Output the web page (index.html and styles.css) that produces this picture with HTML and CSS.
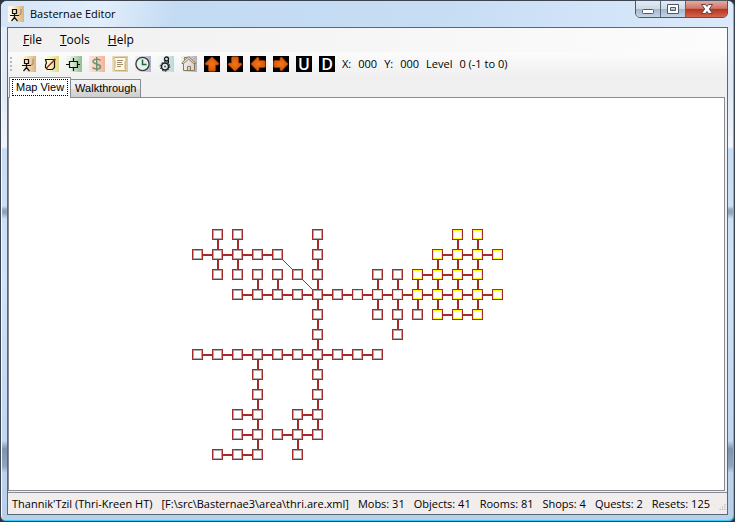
FILE: index.html
```html
<!DOCTYPE html>
<html lang="en">
<head>
<meta charset="utf-8">
<title>Basternae Editor</title>
<link rel="stylesheet" href="styles.css">
</head>
<body>
<div class="window">
  <header class="titlebar">
    <svg class="icon" viewBox="0 0 16 16" aria-hidden="true"><use href="#mob"/></svg>
    <h1 class="title">Basternae Editor</h1>
    <div class="caption">
      <button class="cap" type="button" aria-label="Minimize"><svg width="14" height="12" viewBox="0 0 14 12"><rect x="1.500" y="6.500" width="11" height="4" rx="1" fill="#fff" stroke="#50596b"/></svg></button>
      <button class="cap" type="button" aria-label="Maximize"><svg width="14" height="12" viewBox="0 0 14 12"><path d="M1.500 1.500h11v9h-11zM4.500 4.500v3h5v-3z" fill="#fff" fill-rule="evenodd" stroke="#50596b"/></svg></button>
      <button class="cap close" type="button" aria-label="Close"><svg width="14" height="12" viewBox="0 0 14 12"><path d="M1.500 1.500h4L7 3.500l1.500-2h4L9.300 6l3.200 4.500h-4L7 8.500l-1.500 2h-4L4.700 6z" fill="#fff" stroke="#5b4650"/></svg></button>
    </div>
  </header>

  <main class="client">
    <nav class="menu">
      <button type="button"><u>F</u>ile</button>
      <button type="button"><u>T</u>ools</button>
      <button type="button"><u>H</u>elp</button>
    </nav>

    <div class="toolbar">
      <span class="grip"></span>
      <div class="tools">
        <button type="button" aria-label="Mobs"><svg class="icon" viewBox="0 0 16 16"><use href="#mob"/></svg></button>
        <button type="button" aria-label="Objects"><svg class="icon" viewBox="0 0 16 16"><rect width="16" height="16" fill="url(#yellow)"/><path d="M2.500 3.500h9v8l-2 2h-5l-2-2V9l1-2z" fill="none" stroke="#111" stroke-width="1.200"/><path d="M3.500 12L12.500 3" stroke="#a02018" stroke-width="1.500"/></svg></button>
        <button type="button" aria-label="Rooms"><svg class="icon" viewBox="0 0 16 16"><rect width="16" height="16" fill="url(#green)"/><path d="M3.500 5.500h8v6h-8zM7.500 2v3.500M7.500 11.500V15M0 8.500h3.500M11.500 8.500H14" fill="none" stroke="#111" stroke-width="1.200"/></svg></button>
        <button type="button" aria-label="Shops"><svg class="icon" viewBox="0 0 16 16"><rect width="16" height="16" fill="url(#rose)"/><path d="M11.500 4.500C10 2.500 4.500 2.500 4 5.500c0 3 7.500 2 7.500 5.200 0 3-6 3-8 .8M7.700 1v14" fill="none" stroke="#6b9070" stroke-width="1.400"/></svg></button>
        <button type="button" aria-label="Quests"><svg class="icon" viewBox="0 0 16 16"><rect width="16" height="16" fill="url(#tan)"/><path d="M2 1.500h12v3l-1 1v7l1 2H3l-1-2 1-1v-7l-1-1z" fill="#fffbe8" stroke="#c9aa70"/><path d="M5 4.500h6M5 6.500h5M5 8.500h6M5 10.500h4" stroke="#a08c68"/></svg></button>
        <button type="button" aria-label="Resets"><svg class="icon" viewBox="0 0 16 16"><rect width="16" height="16" fill="url(#slate)"/><circle cx="7.500" cy="8" r="6.600" fill="#e9f2ea" stroke="#303a3a" stroke-width="1.300"/><path d="M7.500 3.500V8.500h4" fill="none" stroke="#176b38" stroke-width="1.500"/></svg></button>
        <button type="button" aria-label="Settings"><svg class="icon" viewBox="0 0 16 16"><rect width="16" height="16" fill="url(#aqua)"/><circle cx="7" cy="10.500" r="3.500" fill="none" stroke="#181818" stroke-width="1.500"/><circle cx="7" cy="10.500" r="4.800" fill="none" stroke="#181818" stroke-dasharray="1.500 1.500"/><circle cx="7" cy="10.500" r="1" fill="#555"/><circle cx="8.500" cy="3" r="2" fill="none" stroke="#181818" stroke-width="1.300"/><path d="M10.500 3.500v4" stroke="#181818"/></svg></button>
        <button type="button" aria-label="Home"><svg class="icon" viewBox="0 0 16 16"><rect width="16" height="16" fill="url(#home)"/><path d="M2.500 7.500v7h11v-7M6.500 14.500v-4h3v4M.8 7.500L5 2.500l3-1.700 6.800 6.700M1 7.500h1.500L7.800 3l4.700 4.500h2.300M3.500 4V1.500h2V3" fill="#f2eee8" fill-opacity=".5" stroke="#8b7d5c"/></svg></button>
        <button type="button" aria-label="North"><svg class="icon" viewBox="0 0 16 16"><use href="#arrow"/></svg></button>
        <button type="button" aria-label="South"><svg class="icon" viewBox="0 0 16 16"><use href="#arrow" transform="rotate(180 8 8)"/></svg></button>
        <button type="button" aria-label="West"><svg class="icon" viewBox="0 0 16 16"><use href="#arrow" transform="rotate(270 8 8)"/></svg></button>
        <button type="button" aria-label="East"><svg class="icon" viewBox="0 0 16 16"><use href="#arrow" transform="rotate(90 8 8)"/></svg></button>
        <button type="button" class="letter"><span>U</span></button>
        <button type="button" class="letter"><span>D</span></button>
      </div>
      <div class="coords"><span>X:</span><span>000</span><span>Y:</span><span>000</span><span>Level</span><span>0 (-1 to 0)</span></div>
    </div>

    <div class="tabs" role="tablist">
      <button class="tab active" type="button" role="tab" aria-selected="true"><span>Map View</span></button>
      <button class="tab" type="button" role="tab" aria-selected="false"><span>Walkthrough</span></button>
    </div>

    <section class="panel">
      <svg id="map" width="312" height="232" viewBox="0 0 312 232" role="img" aria-label="Area map" shape-rendering="crispEdges"></svg>
    </section>

    <footer class="status">
      <span>Thannik'Tzil (Thri-Kreen HT)</span>
      <span>[F:\src\Basternae3\area\thri.are.xml]</span>
      <span>Mobs: 31</span>
      <span>Objects: 41</span>
      <span>Rooms: 81</span>
      <span>Shops: 4</span>
      <span>Quests: 2</span>
      <span>Resets: 125</span>
      <svg class="sizer" width="12" height="12" viewBox="0 0 12 12" aria-hidden="true"><path d="M9 1h2v2h-2zM5 5h2v2h-2zM9 5h2v2h-2zM1 9h2v2h-2zM5 9h2v2h-2zM9 9h2v2h-2z" fill="#b4b0b0"/></svg>
    </footer>
  </main>
</div>

<svg class="defs" width="0" height="0" aria-hidden="true">
  <defs>
    <linearGradient id="orange"><stop offset=".2" stop-color="#fdf6ea"/><stop offset="1" stop-color="#e0b070"/></linearGradient>
    <linearGradient id="yellow"><stop offset=".2" stop-color="#fdfbe4"/><stop offset="1" stop-color="#e0da80"/></linearGradient>
    <linearGradient id="green"><stop offset=".2" stop-color="#eef6ec"/><stop offset="1" stop-color="#8fbf8c"/></linearGradient>
    <linearGradient id="rose"><stop offset="0" stop-color="#fbe6dc"/><stop offset="1" stop-color="#f2b49a"/></linearGradient>
    <linearGradient id="tan"><stop offset="0" stop-color="#ecdcc0"/><stop offset="1" stop-color="#e0c8a0"/></linearGradient>
    <linearGradient id="slate"><stop offset=".2" stop-color="#eeeef4"/><stop offset="1" stop-color="#b0b0c8"/></linearGradient>
    <linearGradient id="aqua"><stop offset=".2" stop-color="#eef6f6"/><stop offset="1" stop-color="#bcd8da"/></linearGradient>
    <linearGradient id="home"><stop offset=".1" stop-color="#f0eeec"/><stop offset="1" stop-color="#b4acb4"/></linearGradient>
    <radialGradient id="ember"><stop offset="0" stop-color="#f07818"/><stop offset="1" stop-color="#d45408"/></radialGradient>
    <g id="mob"><rect width="16" height="16" fill="url(#orange)"/><path d="M4.500 3.500h4v4h-4zM6.500 7.500v4M2 9.500h9M6.500 11.500L3.500 15M6.500 11.500L9.500 15" fill="none" stroke="#111" stroke-width="1.200"/><path d="M13 3v5l-2 1" fill="none" stroke="#8b9070"/></g>
    <g id="arrow"><path d="M0 0h16v16H0z" fill="#000"/><path d="M8 .8l7 6.700-1 1.500h-2.500v5.500l-1 .8h-5l-1-.8V9H2L1 7.500z" fill="url(#ember)" stroke="#b84000" stroke-width=".6"/></g>
  </defs>
</svg>
<script src="map.js"></script>
</body>
</html>
```
FILE: styles.css
```css
* { box-sizing: border-box; }

html, body { margin: 0; }

body {
  background: #2b333d;
  color: #000;
  font: 11px/16px "Open Sans", "Noto Sans", sans-serif;
}

button {
  margin: 0;
  padding: 0;
  border: 0;
  background: none;
  color: inherit;
  font: inherit;
}

svg { display: block; }
.defs { position: absolute; }
.icon { width: 16px; height: 16px; flex: none; }

.window {
  display: flex;
  flex-direction: column;
  min-height: 100vh;
  padding: 0 6px 6px;
  border: 1px solid #3b434f;
  border-radius: 7px 7px 6px 6px;
  box-shadow: inset -1px -1px 0 #35cdf0, inset 1px 1px 0 #f4f9ff;
  background:
    linear-gradient(transparent 205px, #8fa4bc 209px, #8fa4bc 212px, transparent 218px, transparent 440px, #7f95ae 448px, #8ea5c0 465px, transparent 472px) 0 0 / 100% 510px no-repeat,
    linear-gradient(#e3edf8 26px, #dfeaf6 90px, #f2f5fb 146px, #c8dcf3 148px, #cfe3fa 280px, #b9cfe9 100%);
}

.titlebar {
  display: flex;
  align-items: flex-start;
  gap: 6px;
  height: 26px;
  margin: 0 -5px 0 -6px;
  padding-left: 7px;
  border-radius: 6px 6px 0 0;
  background: linear-gradient(100deg, #d3e5f8 0, #e2eefb 14%, #c3dbf3 24%, #c6ddf4 60%, #cfe2f7 76%, #dceafa 100%);
}
.titlebar .icon { margin-top: 5px; }
.title {
  flex: 1;
  margin: 5px 0 0;
  font-size: 11px;
  font-weight: 400;
  line-height: 16px;
}

.caption {
  display: flex;
  height: 18px;
  margin: -1px 5px 0 0;
  overflow: hidden;
  border: 1px solid #4d5768;
  border-radius: 0 0 5px 5px;
}
.cap {
  display: flex;
  align-items: center;
  justify-content: center;
  width: 25px;
  border-right: 1px solid #58657a;
  background: linear-gradient(#e3ebf4, #cfdae7 48%, #a4b6ca 52%, #c4d5e7);
}
.cap.close {
  width: 41px;
  border: 0;
  background: linear-gradient(#e6aa9e, #d07566 46%, #b5351f 52%, #d2654a);
}

.client {
  display: flex;
  flex: 1;
  flex-direction: column;
  border: 1px solid #5b6779;
  background: #f0f0f0;
}

.menu {
  display: flex;
  align-items: center;
  gap: 18px;
  height: 24px;
  padding: 0 15px;
  background: linear-gradient(90deg, #f0f0f0, #fcfcfc);
  font-size: 12px;
}

.toolbar {
  display: flex;
  align-items: center;
  height: 24px;
  padding-left: 2px;
  background: linear-gradient(#fcfcfc, #f0f0f0);
}
.grip {
  width: 2px;
  height: 14px;
  margin-right: 8px;
  background: repeating-linear-gradient(#b8b8b8 0 2px, transparent 2px 4px);
}
.tools { display: flex; gap: 7px; }
.letter {
  width: 16px;
  height: 16px;
  background: #000;
  color: #fff;
  font-size: 16px;
  font-weight: 600;
  line-height: 16px;
}
.coords {
  display: flex;
  gap: 7px;
  margin-left: 7px;
}
.coords span { white-space: pre; }

.tabs {
  display: flex;
  align-items: flex-end;
  height: 21px;
  padding-left: 1px;
  font-family: "Liberation Sans", sans-serif;
}
.tab {
  height: 18px;
  padding: 0 4px;
  border: 1px solid #898c95;
  border-left: 0;
  border-bottom: 0;
  background: linear-gradient(#f2f2f2, #ebebeb 50%, #dcdcdc 51%, #cfcfcf);
  line-height: 17px;
}
.tab.active {
  z-index: 1;
  height: 21px;
  margin-bottom: -1px;
  padding: 1px 2px 2px;
  border-left: 1px solid #898c95;
  background: #fff;
}
.tab.active span {
  display: block;
  padding: 0 3px;
  border: 1px dotted #000;
  line-height: 15px;
}

.panel {
  flex: 1;
  margin: 0 2px 1px 0;
  padding: 131px 20px 20px 183px;
  border: 1px solid #898c95;
  background: #fff;
}

.edge { fill: none; stroke: #a52a2a; stroke-width: 2px; }
.diagonal { stroke: #a52a2a; stroke-width: 1px; }
.room { fill: #a52a2a; }
.inside { fill: #a9a9a9; }
.city { fill: #d3d3d3; }
.field { fill: #ff0; }
.floor { fill: #fff; }

.status {
  display: flex;
  gap: 9px;
  height: 22px;
  padding: 3px 0 0 4px;
  border-top: 1px solid #898c95;
  background: #f1eded;
  white-space: nowrap;
}
.sizer { margin: 5px 1px 0 auto; }
```
FILE: map.js
```
// One character per grid cell: i = inside, c = city, f = field, "." = empty.
const rooms = [
  ".ii...i......ff.",
  "iiiii.i.....ffff",
  ".iiiiii..iiffff.",
  "..iiiiiicccfffff",
  "......i..iiifff.",
  "......i...i.....",
  "iiiiiiiiii......",
  "...i..i.........",
  "...i..i.........",
  "..ii.ii.........",
  "..iiiii.........",
  ".iii.i.........."
];
// Exits as [fromColumn, fromRow, toColumn, toRow].
const exits = [
  [0, 1, 4, 1], [12, 1, 15, 1], [11, 2, 14, 2], [2, 3, 15, 3], [12, 4, 14, 4],
  [0, 6, 9, 6], [2, 9, 3, 9], [5, 9, 6, 9], [2, 10, 3, 10], [4, 10, 6, 10], [1, 11, 3, 11],
  [1, 0, 1, 2], [2, 0, 2, 2], [3, 2, 3, 3], [4, 2, 4, 3], [6, 0, 6, 10],
  [9, 2, 9, 4], [10, 2, 10, 5], [11, 2, 11, 4], [12, 1, 12, 4], [13, 0, 13, 4],
  [14, 0, 14, 4], [3, 6, 3, 11], [5, 9, 5, 11], [4, 1, 6, 3]
];
const kinds = { i: "inside", c: "city", f: "field" };
const step = 20;
const parts = exits.map(([a, b, c, d]) => {
  const kind = a !== c && b !== d ? "diagonal" : "edge";
  return `<line class="${kind}" x1="${a * step + 6}" y1="${b * step + 6}" x2="${c * step + 6}" y2="${d * step + 6}"/>`;
});
rooms.forEach((row, r) => [...row].forEach((cell, c) => {
  if (cell === ".") return;
  const x = c * step;
  const y = r * step;
  parts.push(
    `<rect class="room" x="${x}" y="${y}" width="11" height="11"/>` +
    `<rect class="${kinds[cell]}" x="${x + 1}" y="${y + 1}" width="9" height="9"/>` +
    `<rect class="floor" x="${x + 2}" y="${y + 2}" width="7" height="7"/>`
  );
}));
document.getElementById("map").innerHTML = parts.join("");
```
